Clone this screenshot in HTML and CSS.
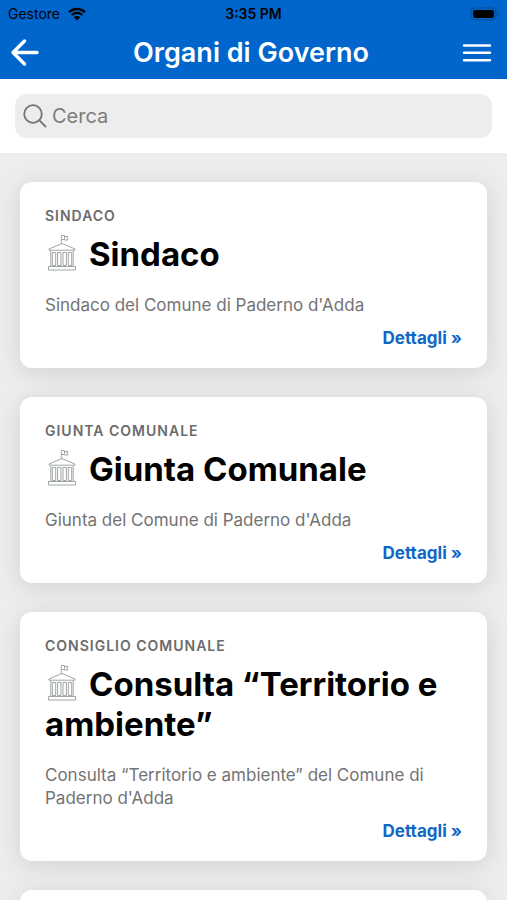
FILE: index.html
```html
<!DOCTYPE html>
<html lang="it">
<head>
<meta charset="utf-8">
<meta name="viewport" content="width=device-width, initial-scale=1">
<title>Organi di Governo</title>
<link rel="stylesheet" href="styles.css">
</head>
<body>
<svg class="sprite" aria-hidden="true">
  <symbol id="institution" viewBox="0 0 32 40">
    <path d="M15.300 10.500V2.500h3.200v4h-3.200M18.500 3.500h3.500l-1 1.700 1 1.800h-3.500M16 10.500L3 16v1.200h26V16zM6.300 19.500h3.400v13H6.300zM11.600 19.500h3.400v13h-3.400zM17 19.500h3.400v13H17zM22.300 19.500h3.400v13h-3.400zM4.800 17.500v15.500M27.200 17.500v15.500M2.500 33.500h27v3.500h-27z"/>
  </symbol>
</svg>
<header class="header">
  <div class="status">
    <span class="carrier">Gestore
      <svg class="wifi" viewBox="0 0 18 14" aria-hidden="true"><path d="M1 5.200a11.500 11.500 0 0 1 16 0M3.800 8a7.500 7.500 0 0 1 10.400 0"/><path class="wifi-dot" d="M9 13.500L5.800 10.200a4.600 4.600 0 0 1 6.400 0z"/></svg>
    </span>
    <span class="clock">3:35 PM</span>
    <svg class="battery" viewBox="0 0 30 14" aria-hidden="true"><rect class="battery-case" x="2" y="1" width="25" height="12" rx="4"/><rect x="4" y="3" width="21" height="8" rx="2"/><path class="battery-case" d="M29 5v4"/></svg>
  </div>
  <div class="bar">
    <button class="icon-button" aria-label="Indietro"><svg viewBox="0 0 30 30" aria-hidden="true"><path class="back" d="M14.500 3L3 14.500l11.500 11.500M3.500 14.500H27"/></svg></button>
    <h1 class="page-title">Organi di Governo</h1>
    <button class="icon-button" aria-label="Menu"><svg viewBox="0 0 30 30" aria-hidden="true"><path class="menu" d="M2 7.500h26M2 14.800h26M2 22.200h26"/></svg></button>
  </div>
</header>
<form class="search" role="search">
  <label class="search-box">
    <svg class="search-icon" viewBox="0 0 24 24" aria-hidden="true"><circle cx="10" cy="10" r="8.800"/><path d="M16.400 16.400L22.500 22.500"/></svg>
    <input class="search-input" type="search" placeholder="Cerca" aria-label="Cerca">
  </label>
</form>
<main class="list">
  <article class="card">
    <p class="category">Sindaco</p>
    <h2 class="title"><svg class="institution" aria-hidden="true"><use href="#institution"/></svg>Sindaco</h2>
    <p class="text">Sindaco del Comune di Paderno d'Adda</p>
    <a class="details" href="#sindaco">Dettagli »</a>
  </article>
  <article class="card">
    <p class="category">Giunta Comunale</p>
    <h2 class="title"><svg class="institution" aria-hidden="true"><use href="#institution"/></svg>Giunta Comunale</h2>
    <p class="text">Giunta del Comune di Paderno d'Adda</p>
    <a class="details" href="#giunta">Dettagli »</a>
  </article>
  <article class="card">
    <p class="category">Consiglio Comunale</p>
    <h2 class="title"><svg class="institution" aria-hidden="true"><use href="#institution"/></svg>Consulta “Territorio e ambiente”</h2>
    <p class="text">Consulta “Territorio e ambiente” del Comune di Paderno d'Adda</p>
    <a class="details" href="#consulta">Dettagli »</a>
  </article>
  <article class="card"></article>
</main>
</body>
</html>
```
FILE: styles.css
```css
* {
  box-sizing: border-box;
}

body {
  margin: 0;
  height: 100vh;
  display: flex;
  flex-direction: column;
  overflow: hidden;
  background: #ededed;
  color: #000;
  font-family: Inter, "Liberation Sans", sans-serif;
}

h1, h2, p {
  margin: 0;
}

.sprite {
  position: absolute;
  width: 0;
  height: 0;
}

.header {
  flex: none;
  background: #0066cc;
}

.status {
  display: grid;
  grid-template-columns: 1fr auto 1fr;
  align-items: center;
  height: 27px;
  padding: 0 8px;
  font-size: 14px;
}

.carrier {
  display: flex;
  align-items: center;
  gap: 8px;
}

.wifi {
  width: 18px;
  height: 14px;
  fill: none;
  stroke: #000;
  stroke-width: 2.4;
}

.wifi-dot {
  fill: #000;
  stroke: none;
}

.clock {
  font-weight: 600;
}

.battery {
  justify-self: end;
  width: 30px;
  height: 14px;
}

.battery-case {
  fill: none;
  stroke: #004a94;
  stroke-width: 1;
}

.bar {
  display: flex;
  align-items: center;
  justify-content: space-between;
  height: 52px;
  padding: 0 15px 0 10px;
}

.icon-button {
  display: flex;
  width: 30px;
  height: 30px;
  padding: 0;
  border: 0;
  background: none;
}

.icon-button svg {
  width: 30px;
  height: 30px;
  fill: none;
  stroke: #fff;
  stroke-linecap: round;
  stroke-linejoin: round;
}

.back {
  stroke-width: 3.4;
}

.menu {
  stroke-width: 2.4;
}

.page-title {
  color: #fff;
  font-size: 27px;
  font-weight: 600;
  line-height: 32px;
}

.search {
  flex: none;
  padding: 15px;
  background: #fff;
}

.search-box {
  display: flex;
  align-items: center;
  gap: 5px;
  height: 44px;
  padding: 0 8px;
  border-radius: 12px;
  background: #ededed;
}

.search-icon {
  flex: none;
  width: 24px;
  height: 24px;
  fill: none;
  stroke: #737373;
  stroke-width: 1.8;
  stroke-linecap: round;
}

.search-input {
  flex: 1;
  min-width: 0;
  padding: 0;
  border: 0;
  outline: 0;
  background: none;
  font: 20px/24px Inter, "Liberation Sans", sans-serif;
}

.search-input::placeholder {
  color: #7c7c7c;
  opacity: 1;
}

.list {
  flex: 1;
  min-height: 0;
  display: flex;
  flex-direction: column;
  gap: 29px;
  padding: 29px 20px 0;
  overflow: hidden;
}

.card {
  flex: none;
  display: flex;
  flex-direction: column;
  min-height: 186px;
  padding: 24px 25px 19px;
  border-radius: 12px;
  background: #fff;
  box-shadow: 0 4px 24px rgba(0, 0, 0, 0.12);
}

.category {
  color: #6b6b6b;
  font-size: 14px;
  font-weight: 600;
  line-height: 20px;
  letter-spacing: 1px;
  text-transform: uppercase;
}

.title {
  margin-top: 8px;
  font-size: 33px;
  font-weight: 700;
  line-height: 40px;
}

.institution {
  width: 34px;
  height: 40px;
  margin: -4px 10px -4px 0;
  vertical-align: -3px;
  fill: none;
  stroke: #a0a5a7;
  stroke-width: 1;
}

.text {
  margin-top: 20px;
  color: #737373;
  font-size: 17px;
  line-height: 23px;
}

.details {
  align-self: flex-end;
  margin-top: 10px;
  color: #0f67c6;
  font-size: 17px;
  font-weight: 700;
  line-height: 22px;
  text-decoration: none;
}
```
